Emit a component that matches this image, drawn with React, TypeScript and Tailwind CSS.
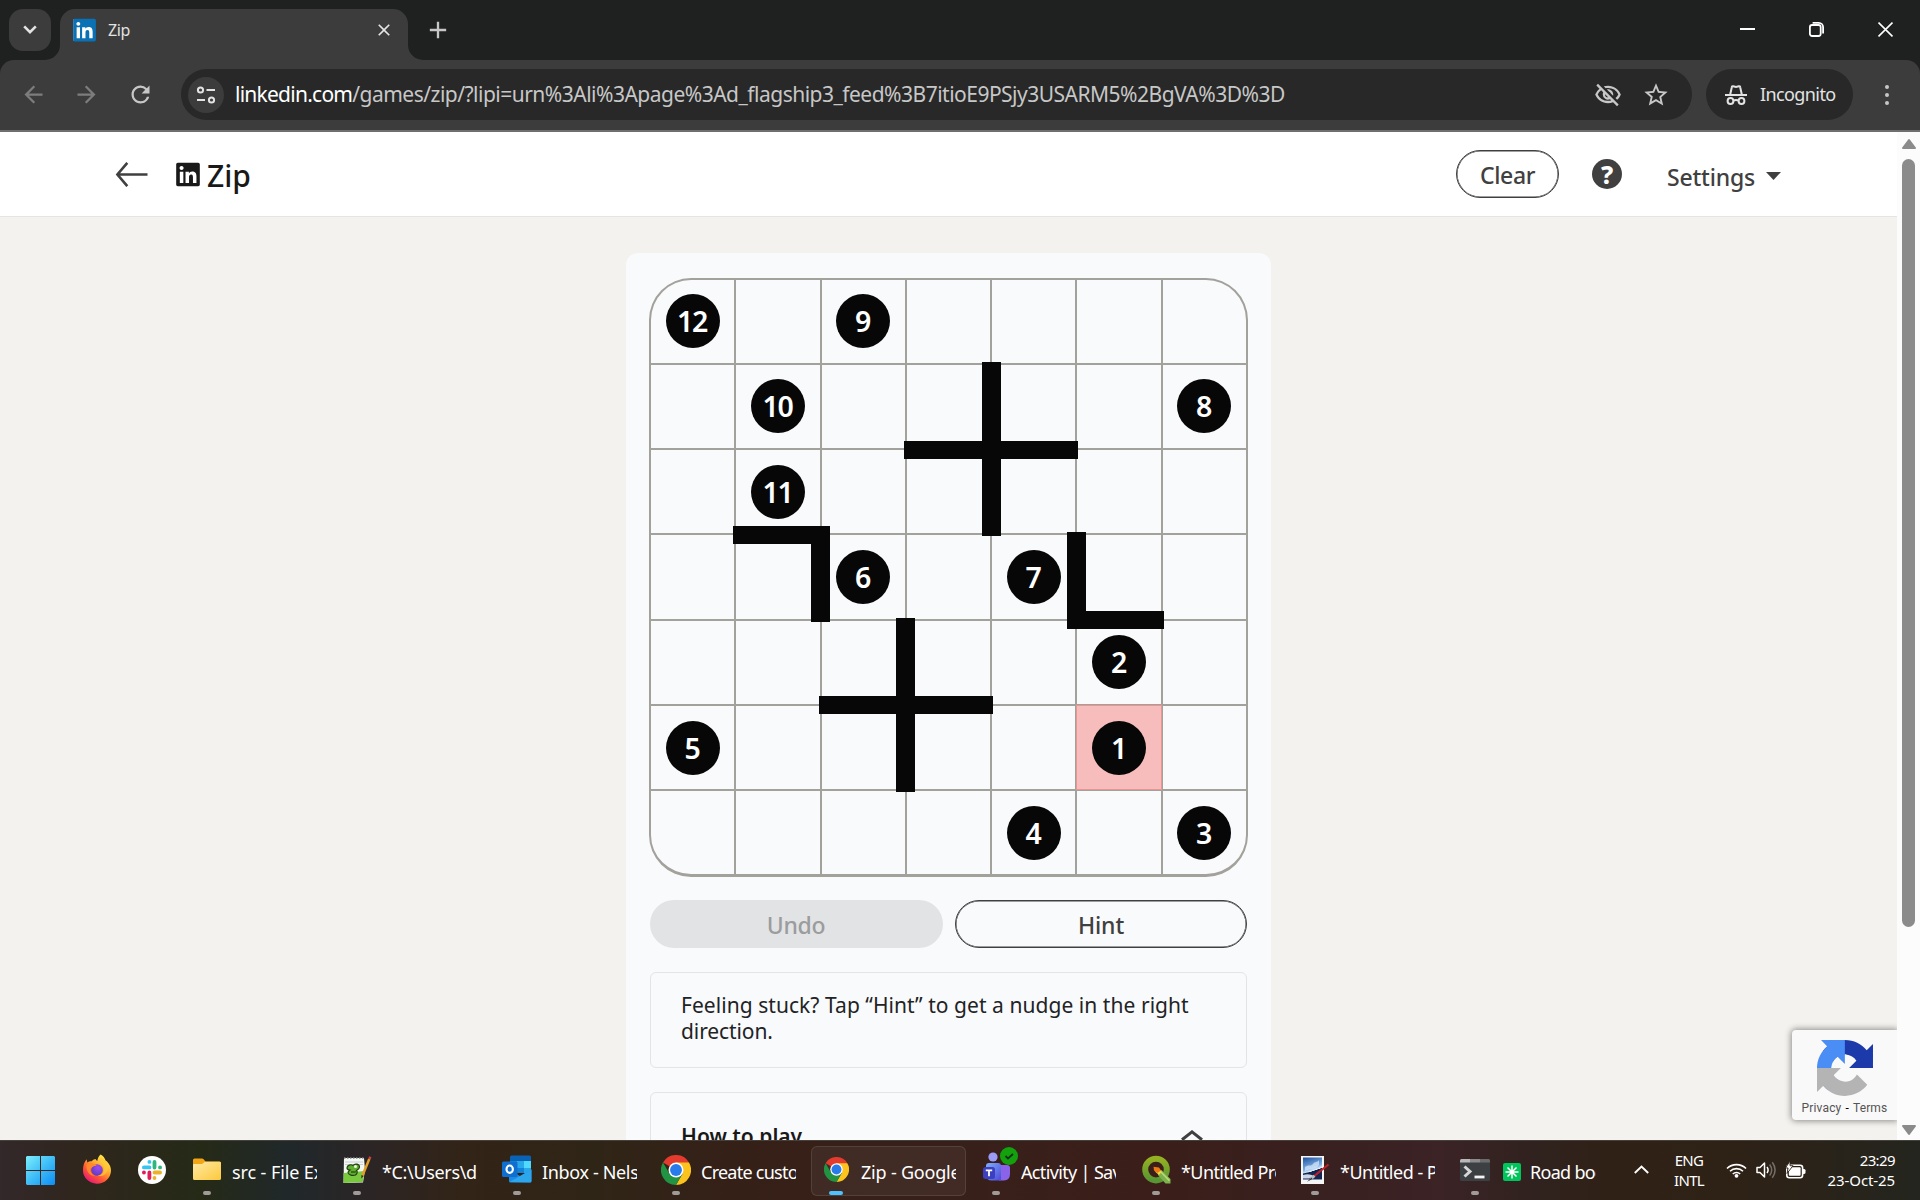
import React from 'react';
import { FaLinkedin } from 'react-icons/fa';
import {
  MdArrowBack,
  MdArrowForward,
  MdRefresh,
  MdOutlineVisibilityOff,
  MdStarBorder,
  MdClose,
  MdAdd,
} from 'react-icons/md';

/* ---------- Browser chrome ---------- */

function TabStrip() {
  return (
    <div className="flex h-[60px] items-start bg-[#1f2121] pt-[9px]">
      <div className="ml-[9px] flex h-[42px] w-[42px] items-center justify-center rounded-[14px] bg-[#3c3c3c]">
        <svg width="14" height="10" viewBox="0 0 14 10" fill="none" stroke="#e3e3e3" strokeWidth="2.600">
          <path d="M1.200 1.400 7 7.200l5.800-5.800" />
        </svg>
      </div>
      <svg className="ml-[-6px] mt-[36px] shrink-0" width="15" height="15" viewBox="0 0 15 15" fill="#3c3c3c">
        <path d="M15 0v15H0A15 15 0 0 0 15 0z" />
      </svg>
      <div className="flex h-[51px] w-[348px] items-center rounded-t-[15px] bg-[#3c3c3c] pb-[9px] pl-[13px]">
        <div className="flex h-[22px] w-[22px] items-center justify-center rounded-[2px] bg-white">
          <FaLinkedin className="h-[26px] w-[25px] shrink-0 text-[#0a71b4]" />
        </div>
        <span className="ml-[13px] text-[16px] leading-[22px] tracking-[-0.4px] text-[#e3e3e3]">Zip</span>
        <MdClose className="ml-auto mr-[14px] h-[20px] w-[20px] text-[#e3e3e3]" />
      </div>
      <svg className="mt-[36px] shrink-0" width="15" height="15" viewBox="0 0 15 15" fill="#3c3c3c">
        <path d="M0 0v15h15A15 15 0 0 1 0 0z" />
      </svg>
      <MdAdd className="ml-[1px] mt-[7px] h-[28px] w-[28px] text-[#c7c7c7]" />
      <div className="ml-auto mr-[27px] mt-[12px] flex items-center text-white">
        <svg width="15" height="17" viewBox="0 0 15 17" stroke="currentColor" strokeWidth="2">
          <path d="M0 8h15" />
        </svg>
        <svg className="ml-[54px]" width="15" height="17" viewBox="0 0 15 17" fill="none" stroke="currentColor" strokeWidth="1.800">
          <rect x="0.900" y="4" width="10.800" height="11" rx="2.200" />
          <path d="M3.600 1.900h6.200a4.300 4.300 0 0 1 4.300 4.300v6.400" />
        </svg>
        <svg className="ml-[54px]" width="15" height="17" viewBox="0 0 15 17" stroke="currentColor" strokeWidth="1.700">
          <path d="m.5 1.500 14 14m0-14-14 14" />
        </svg>
      </div>
    </div>
  );
}

function SiteSettingsIcon() {
  return (
    <svg width="20" height="20" viewBox="0 0 20 20" fill="none" stroke="#e3e3e3" strokeWidth="2">
      <circle cx="4.500" cy="5" r="2.600" />
      <path d="M10.500 5H19M1 15h8" />
      <circle cx="15.500" cy="15" r="2.600" />
    </svg>
  );
}

function IncognitoIcon() {
  return (
    <svg width="22" height="20" viewBox="0 0 22 20" fill="none" stroke="#e3e3e3" strokeWidth="2">
      <path d="M0 10h22" />
      <path d="M5.200 9.500 6.800 2.200Q7 1 8.200 1.200L11 1.900l2.800-.7q1.200-.2 1.400 1l1.600 7.300" />
      <circle cx="5.500" cy="16" r="2.900" />
      <circle cx="16.500" cy="16" r="2.900" />
      <path d="M8.300 15.700q2.700-1.600 5.400 0" />
    </svg>
  );
}

function Toolbar() {
  return (
    <div className="bg-[#1f2121]">
      <div className="flex h-[72px] items-start rounded-t-[14px] border-b-2 border-[#6f6f6f] bg-[#3c3c3c] pt-[9px]">
        <div className="flex h-[51px] items-center">
          <MdArrowBack className="ml-[20px] h-[27px] w-[27px] text-[#7d7d7d]" />
          <MdArrowForward className="ml-[26px] h-[27px] w-[27px] text-[#7d7d7d]" />
          <MdRefresh className="ml-[27px] h-[27px] w-[27px] text-[#c7c7c7]" />
        </div>
        <div className="ml-[27px] flex h-[51px] w-[1511px] items-center rounded-full bg-[#282828]">
          <div className="ml-[7px] flex h-[36px] w-[36px] items-center justify-center rounded-full bg-[#3c3c3c]">
            <SiteSettingsIcon />
          </div>
          <div className="-mt-px ml-[11px] whitespace-nowrap text-[21px] leading-[30px] text-[#c7c7c7]">
            <span className="tracking-[-0.75px] text-white">linkedin.com</span>
            <span className="tracking-[-0.51px]">/games/zip/?lipi=urn%3Ali%3Apage%3Ad_flagship3_feed%3B7itioE9PSjy3USARM5%2BgVA%3D%3D</span>
          </div>
          <MdOutlineVisibilityOff className="ml-auto h-[28px] w-[28px] text-[#c7c7c7]" />
          <MdStarBorder className="ml-[20px] mr-[22px] h-[28px] w-[28px] text-[#c7c7c7]" />
        </div>
        <div className="ml-[14px] flex h-[51px] w-[147px] items-center rounded-full bg-[#282828] pl-[19px]">
          <IncognitoIcon />
          <span className="ml-[13px] text-[18px] tracking-[-0.6px] text-[#e3e3e3]">Incognito</span>
        </div>
        <div className="ml-[32px] mt-[16px] flex flex-col gap-1">
          <i className="h-1 w-1 rounded-full bg-[#c7c7c7]" />
          <i className="h-1 w-1 rounded-full bg-[#c7c7c7]" />
          <i className="h-1 w-1 rounded-full bg-[#c7c7c7]" />
        </div>
      </div>
    </div>
  );
}

/* ---------- Game page ---------- */

function GameHeader() {
  return (
    <header className="flex h-[85px] shrink-0 items-center border-b border-[#e4e4e2] bg-white pr-[116px] pl-[115px]">
      <svg width="33" height="25" viewBox="0 0 33 25" fill="none" stroke="#404040" strokeWidth="2.600">
        <path d="M2 12.500h30.500M12.300.8 2.400 12.500l9.900 11.700" />
      </svg>
      <FaLinkedin className="ml-[27px] h-[27px] w-[26px] text-[#191919]" />
      <h1 className="ml-[6px] mt-[4px] text-[30px] font-medium leading-[40px] text-[#191919]">Zip</h1>
      <button className="ml-auto flex h-[48px] w-[103px] items-center justify-center rounded-full border border-[#404040] pt-[3px] text-[23px] font-medium tracking-[-0.4px] text-[#404040] shadow-[inset_0_0_0_0.5px_#404040]">
        Clear
      </button>
      <div className="ml-[33px] flex h-[30px] w-[30px] items-center justify-center rounded-full bg-[#404040] text-[25px] font-extrabold leading-none text-white">
        ?
      </div>
      <span className="ml-[45px] mt-[6px] text-[23px] font-medium tracking-[-0.2px] text-[#404040]">Settings</span>
      <svg className="ml-[11px] mt-[4px]" width="15" height="8" viewBox="0 0 15 8" fill="#404040">
        <path d="M0 0h15L7.500 8z" />
      </svg>
    </header>
  );
}

const numbers: Record<string, number> = {
  '0-0': 12,
  '0-2': 9,
  '1-1': 10,
  '1-6': 8,
  '2-1': 11,
  '3-2': 6,
  '3-4': 7,
  '4-5': 2,
  '5-0': 5,
  '5-5': 1,
  '6-4': 4,
  '6-6': 3,
};

const walls = [
  'left-[333px] top-[84px] w-[19px] h-[174px]',
  'left-[255px] top-[163px] w-[174px] h-[18px]',
  'left-[84px] top-[248px] w-[97px] h-[18px]',
  'left-[162px] top-[248px] w-[19px] h-[96px]',
  'left-[418px] top-[254px] w-[19px] h-[97px]',
  'left-[418px] top-[333px] w-[97px] h-[18px]',
  'left-[247px] top-[340px] w-[19px] h-[174px]',
  'left-[170px] top-[418px] w-[174px] h-[18px]',
];

function Board() {
  return (
    <div className="relative h-[599px] w-[599px]">
      <div className="grid h-[599px] w-[599px] grid-cols-[85px_86px_85px_85px_85px_86px_83px] grid-rows-[85px_85px_85px_86px_85px_85px_83px] overflow-hidden rounded-[42px] border-2 border-b-[3px] border-[#a3a19c]">
        {Array.from({ length: 49 }, (_, i) => {
          const row = Math.floor(i / 7);
          const col = i % 7;
          const value = numbers[`${row}-${col}`];
          return (
            <div
              key={i}
              className={`relative flex items-center justify-center border-[#a3a19c] ${col < 6 ? 'border-r-2' : ''} ${row < 6 ? 'border-b-2' : ''} ${col === 2 || col === 6 ? 'pr-px' : ''} ${row === 0 || row === 1 || row === 4 ? 'pb-px' : ''}`}
            >
              {value === 1 && (
                <div className="absolute -bottom-px -left-px -right-px -top-px border border-[#ec9492] bg-[#f7bdbc]" />
              )}
              {value !== undefined && (
                <div className="relative flex h-[54px] w-[54px] items-center justify-center rounded-full bg-[#070707] pb-px pr-px pt-[2px] text-[28.500px] font-semibold leading-none tracking-[-1.200px] text-white">
                  {value}
                </div>
              )}
            </div>
          );
        })}
      </div>
      {walls.map((w) => (
        <div key={w} className={`absolute bg-[#070707] ${w}`} />
      ))}
    </div>
  );
}

function GameCard() {
  return (
    <section className="mx-auto flex w-[645px] shrink-0 flex-col rounded-t-[12px] bg-[#f9fafc] pl-[23px] pr-[24px] pt-[25px]">
      <Board />
      <div className="mt-[23px] flex shrink-0 gap-[12px] pl-px">
        <button className="h-[48px] w-[293px] rounded-full bg-[#e2e3e4] pr-px pt-[3px] text-[23px] font-medium tracking-[-0.3px] text-[#9b9c9d]">
          Undo
        </button>
        <button className="h-[48px] flex-1 rounded-full border border-[#404040] pt-[2px] text-[23px] font-medium tracking-[-0.1px] text-[#404040] shadow-[inset_0_0_0_0.5px_#404040]">
          Hint
        </button>
      </div>
      <div className="ml-px mt-[24px] h-[96px] shrink-0 rounded-[6px] border border-[#e3e4e6] pl-[30px] pt-[19px] text-[21px] leading-[26px] text-[#222324]">
        <span className="tracking-[0.05px]">Feeling stuck? Tap “Hint” to get a nudge in the right</span>
        <br />
        <span className="tracking-[-0.1px]">direction.</span>
      </div>
      <div className="ml-px mt-[24px] flex h-[100px] shrink-0 items-start justify-between rounded-[6px] border border-[#e3e4e6] pl-[30px] pr-[43px] pt-[29px]">
        <h2 className="text-[21px] font-semibold leading-[28px] text-[#191919]">How to play</h2>
        <svg className="mt-[8px]" width="22" height="11" viewBox="0 0 22 11" fill="none" stroke="#404040" strokeWidth="3">
          <path d="M1 9.800 11 1.900l10 7.900" />
        </svg>
      </div>
    </section>
  );
}

function RecaptchaBadge() {
  return (
    <div className="absolute right-0 top-[898px] flex h-[90px] w-[105px] flex-col items-center rounded-l-[4px] bg-[#f9f9f9] pt-[10px] shadow-[0_0_6px_1px_#8c8c8c]">
      <svg width="56" height="56" viewBox="0 0 64 64">
        <path fill="#1c3aa9" d="M64 31.955l-.033-1.370V4.687l-7.160 7.160C50.948 4.674 42.033.093 32.050.093c-10.400 0-19.622 4.960-25.458 12.640l11.736 11.860a15.550 15.550 0 0 1 4.754-5.334c2.050-1.600 4.952-2.906 8.968-2.906.485 0 .860.057 1.135.163 4.976.393 9.288 3.140 11.828 7.124l-8.307 8.307L64 31.953" />
        <path fill="#4a8df5" d="M31.862.094l-1.370.033H4.594l7.160 7.160C4.580 13.147 0 22.060 0 32.046c0 10.400 4.960 19.622 12.640 25.458L24.500 45.768a15.550 15.550 0 0 1-5.334-4.754c-1.600-2.050-2.906-4.952-2.906-8.968 0-.485.057-.860.163-1.135.393-4.976 3.140-9.288 7.124-11.828l8.307 8.307L31.860.095" />
        <path fill="#b4b4b4" d="M.001 32.045l.033 1.370v25.898l7.160-7.160c5.860 7.173 14.774 11.754 24.760 11.754 10.400 0 19.622-4.960 25.458-12.640l-11.736-11.860a15.550 15.550 0 0 1-4.754 5.334c-2.050 1.600-4.952 2.906-8.968 2.906-.485 0-.860-.057-1.135-.163-4.976-.393-9.288-3.140-11.828-7.124l8.307-8.307c-10.522.040-22.400.066-27.295-.005" />
      </svg>
      <p className="mt-[4px] whitespace-nowrap font-[Roboto] text-[12px] leading-[17px] tracking-[0.15px] text-[#555]">
        Privacy <span className="px-px text-black">-</span> Terms
      </p>
    </div>
  );
}

function ScrollBar() {
  return (
    <div className="flex w-[23px] shrink-0 flex-col items-center bg-[#fcfcfc]">
      <svg className="mt-[6px] shrink-0" width="16" height="12" viewBox="0 0 16 12" fill="#8b8b8b" stroke="#8b8b8b" strokeWidth="2" strokeLinejoin="round">
        <path d="M8 2 14 10H2z" />
      </svg>
      <div className="mt-[9px] h-[768px] w-[13px] rounded-full bg-[#8b8b8b]" />
      <svg className="mb-[4px] mt-auto shrink-0" width="16" height="12" viewBox="0 0 16 12" fill="#8b8b8b" stroke="#8b8b8b" strokeWidth="2" strokeLinejoin="round">
        <path d="M8 10 14 2H2z" />
      </svg>
    </div>
  );
}

/* ---------- Taskbar icons ---------- */

function WindowsIcon() {
  return (
    <svg width="29" height="29" viewBox="0 0 29 29">
      <defs>
        <linearGradient id="win" x1="0" y1="0" x2="29" y2="29" gradientUnits="userSpaceOnUse">
          <stop offset="0" stopColor="#7ceffc" />
          <stop offset="0.5" stopColor="#3fbdf7" />
          <stop offset="1" stopColor="#0c8df5" />
        </linearGradient>
      </defs>
      <path fill="url(#win)" d="M1 0h13v14H0V1zM15 0h13l1 1v13H15zM0 15h14v14H1l-1-1zM15 15h14v13l-1 1H15z" />
    </svg>
  );
}

function FirefoxIcon() {
  return (
    <svg width="30" height="30" viewBox="0 0 30 30">
      <defs>
        <linearGradient id="ffx" x1="24" y1="2" x2="5" y2="28" gradientUnits="userSpaceOnUse">
          <stop offset="0" stopColor="#fff04a" />
          <stop offset="0.35" stopColor="#ffb030" />
          <stop offset="0.65" stopColor="#ff5a33" />
          <stop offset="1" stopColor="#e5127c" />
        </linearGradient>
        <radialGradient id="ffp" cx="0.6" cy="0.3" r="0.7">
          <stop offset="0" stopColor="#a04bf0" />
          <stop offset="1" stopColor="#5b3cc4" />
        </radialGradient>
      </defs>
      <path fill="url(#ffx)" d="M18.600.5c3 1.600 4.300 4 5 6 .9.300 1.500 1 1.800 1.600 2.400 2.400 3.600 5.400 3.600 8.400A14 13.500 0 0 1 1 16C1 11.500 2.200 8 4.700 5.200l.5 3.200c1.200-.8 2.800-1.300 4.400-1.200 1.500-1.700 3-2 4-2.200.4 1 .9 1.500 1.700 2 .4-3 1.500-5 3.300-6.500z" />
      <circle cx="15" cy="16" r="5.800" fill="url(#ffp)" />
      <path fill="#ff8a2a" d="M4.500 11c3-3 8-2 10.200.8-3.200-.2-4 1.300-6.200 2.600-.8 3.500 1.500 6.300 5 7.200-5.500.8-9.500-3.600-9-10.600z" />
      <path fill="#ffc83a" d="M18 7c3.200 2.500 4.600 6 3.600 10-.6 2.500-3 4.500-6 4.700 5 1.500 10-1.700 10.300-7.200C26 10 23 6 19.500 3z" opacity="0.75" />
    </svg>
  );
}

function SlackIcon() {
  return (
    <svg width="28" height="28" viewBox="0 0 28 28">
      <circle cx="14" cy="14" r="14" fill="#fff" />
      <g strokeWidth="3.800" strokeLinecap="round">
        <path stroke="#36c5f0" d="M11.400 5.900h.1M5.900 11.400h5.600" />
        <path stroke="#2eb67d" d="M16.500 5.900v5.600M22 11.400h.1" />
        <path stroke="#ecb22e" d="M16.500 22v.1M16.500 16.500h5.600" />
        <path stroke="#e01e5a" d="M11.400 16.500v5.600M5.900 16.500H6" />
      </g>
    </svg>
  );
}

function FolderIcon() {
  return (
    <svg width="28" height="24" viewBox="0 0 28 24">
      <defs>
        <linearGradient id="fold" x1="0" y1="0" x2="1" y2="1">
          <stop offset="0" stopColor="#ffe9a6" />
          <stop offset="1" stopColor="#fcc93c" />
        </linearGradient>
      </defs>
      <path fill="#f2a515" d="M0 2q0-1.500 1.500-1.500H9q1 0 1.600.8L12.500 3.500H26.500Q28 3.500 28 5v6H0z" />
      <path fill="url(#fold)" d="M0 7q0-1 1-1h8l3-2.300h14.500Q28 3.700 28 5v15.500q0 1.500-1.500 1.500h-25Q0 22 0 20.500z" />
    </svg>
  );
}

function NotepadPlusIcon() {
  return (
    <svg width="30" height="28" viewBox="0 0 30 28">
      <path fill="#f4f6f2" d="M2 2h20l1 12-2 12.500L1.500 27z" />
      <path fill="#79c840" d="M1.600 17 22.500 15l-1.700 11L1.500 27z" />
      <path stroke="#b9c4cf" strokeWidth="0.800" d="M3 6h18M3 8.500h18" />
      <path stroke="#7c8388" strokeWidth="1.600" strokeDasharray="1.500 1.500" d="M2 2h20" />
      <path fill="#5fae2f" stroke="#22400f" strokeWidth="1.200" d="M5 12c0-3 4-4 6-2.500C13 7 17.500 8 17.500 11c0 2-2 3-3 3.500 1 1 1 3-1 4.500-3 1-7 0-7.500-2.500C6 15 7.500 14.500 8 14c-1.500 0-3-.5-3-2z" />
      <circle cx="13.500" cy="10.500" r="1.500" fill="#e9f7dc" />
      <path fill="#3c6d1d" d="M9 15h7l-3 2H9z" />
      <path stroke="#e2a126" strokeWidth="2.500" d="M27.300 3 20.500 19.500" />
      <path stroke="#d23f3f" strokeWidth="2.500" d="M28.300.8 27.400 3" />
      <path fill="#3a2b12" d="m19.400 19 2.300 1-2.300 2.400z" />
    </svg>
  );
}

function OutlookIcon() {
  return (
    <svg width="30" height="29" viewBox="0 0 30 29">
      <path fill="#0a62b5" d="M8 2q0-1.500 1.500-1.500h18Q29 .5 29 2v4H8z" />
      <path fill="#1490df" d="M8 6h7v7H8z" />
      <path fill="#28a8ea" d="M15 6h7v7h-7z" />
      <path fill="#50d9ff" d="M22 6h7v7h-7z" />
      <path fill="#0f6cc4" d="M8 13h7v5H8z" />
      <path fill="#1283d8" d="M15 13h7v5h-7z" />
      <path fill="#28a8ea" d="M22 13h7v5h-7z" />
      <path fill="#1a8be4" d="M7 14.500 18 21l11.500-6.500V26q0 1.500-1.500 1.500H8.500Q7 27.500 7 26z" />
      <path fill="#33b0f2" d="M7.500 27 29.500 14.500V26q0 1.500-1.500 1.500z" opacity="0.75" />
      <rect y="6.500" width="15.500" height="15.500" rx="1.500" fill="#0f6fd0" />
      <ellipse cx="7.700" cy="14.200" rx="3.200" ry="3.700" fill="none" stroke="#fff" strokeWidth="2.100" />
    </svg>
  );
}

function ChromeIcon({ size }: { size: number }) {
  return (
    <svg width={size} height={size} viewBox="0 0 48 48">
      <path fill="#e33b2e" d="M24 24 3.200 12A24 24 0 0 1 44.800 12z" />
      <path fill="#fcc31e" d="M24 24V12h20.800A24 24 0 0 1 24 48l10.400-18z" />
      <path fill="#229342" d="M34.400 30 24 48A24 24 0 0 1 3.200 12l10.400 18z" />
      <circle cx="24" cy="24" r="12" fill="#fff" />
      <circle cx="24" cy="24" r="9.500" fill="#2a7bea" />
    </svg>
  );
}

function TeamsIcon() {
  return (
    <svg width="36" height="36" viewBox="0 0 36 36">
      <defs>
        <linearGradient id="tm" x1="0" y1="0" x2="1" y2="1">
          <stop offset="0" stopColor="#7fb0ff" />
          <stop offset="1" stopColor="#4c49d6" />
        </linearGradient>
      </defs>
      <path fill="#8a63e8" d="M17 18h8q3 0 3 3v6q0 6-6 6.500h-5z" />
      <circle cx="11" cy="10" r="4.600" fill="#9b9cf8" />
      <path fill="url(#tm)" d="M4 19q0-3 3-3h9q3 0 3 3v14.500h-9q-6 0-6-6z" />
      <rect x="1" y="20" width="12" height="12" rx="2.500" fill="#3c3fbf" />
      <path stroke="#fff" strokeWidth="1.800" d="M3.800 23.300h6.400M7 23.300v6" />
      <circle cx="27" cy="9" r="9" fill="#13a10e" />
      <path fill="none" stroke="#16301a" strokeWidth="1.800" d="m23.500 9 2.500 2.500 5-4.500" />
    </svg>
  );
}

function QgisIcon() {
  return (
    <svg width="30" height="30" viewBox="0 0 30 30">
      <defs>
        <linearGradient id="qg" x1="0" y1="0" x2="0" y2="1">
          <stop offset="0" stopColor="#93b023" />
          <stop offset="1" stopColor="#589632" />
        </linearGradient>
      </defs>
      <circle cx="15" cy="14.600" r="10.800" fill="none" stroke="url(#qg)" strokeWidth="6" />
      <path fill="#7db14a" d="m17.500 15.500 3-.5L29.500 24v4.500h-5L17 20z" />
      <path fill="#b9d97c" d="m17.500 15.500 1.800-.3 9.700 9.800-1.200 1.200z" />
      <path fill="#f2d63c" d="m14 13 4.500 1 2 3-2.500 3-3.500-3z" />
      <path fill="#ee7913" d="m12.500 11.800 5.500.7 2 3-3.500 2.500-3.500-2.500z" />
    </svg>
  );
}

function PaintIcon() {
  return (
    <svg width="30" height="30" viewBox="0 0 30 30">
      <defs>
        <linearGradient id="sky" x1="0" y1="0" x2="0.3" y2="1">
          <stop offset="0" stopColor="#1d4f9e" />
          <stop offset="0.55" stopColor="#7fb1e6" />
          <stop offset="0.7" stopColor="#e8f1fa" />
          <stop offset="0.72" stopColor="#12204a" />
          <stop offset="1" stopColor="#1b2f66" />
        </linearGradient>
      </defs>
      <path fill="#f5f5f5" d="M1 1h23v28H1z" />
      <path fill="url(#sky)" d="M3 2.500h19v22H3z" />
      <path fill="#dbe9f8" d="M5 12c3-3 6 0 8-3s4-1 6-4v5c-3 5-8 3-14 6z" opacity="0.700" />
      <path fill="#16264f" d="M3 18.500q9-3 19 0v5.500H3z" />
      <path fill="#c9d6e8" d="M3 20q6-2 11 1l-5 2.500H3z" />
      <path stroke="#c21f26" strokeWidth="2" d="M28.500 9.500 13 22" />
      <path stroke="#b9bcc2" strokeWidth="2.800" d="m14.500 20.800-4 3.500" />
      <path fill="#333" d="m11.500 22.500-4.500 4.300 5.500-2.800z" />
    </svg>
  );
}

function TerminalIcon() {
  return (
    <svg width="30" height="24" viewBox="0 0 30 24">
      <rect y="1" width="30" height="22" rx="1.500" fill="#3c4042" />
      <path fill="#b9b9b9" d="M0 2.500Q0 1 1.500 1H10v3.500H0z" />
      <path fill="#8b8b8b" d="M10 1h10v3.500H10z" />
      <path fill="#6b6b6b" d="M20 1h8.500Q30 1 30 2.500v2H20z" />
      <path fill="none" stroke="#d6d6d6" strokeWidth="3" d="m4.500 8.500 5.500 5-5.500 5" />
      <path stroke="#f4f4f4" strokeWidth="2.800" d="M14.500 19h10" />
    </svg>
  );
}

function GreenStarIcon() {
  return (
    <svg width="18" height="18" viewBox="0 0 18 18">
      <rect width="18" height="18" rx="2" fill="#00c45c" />
      <path stroke="#fff" strokeWidth="1.500" d="M9 2.500v13M2.500 9h13M4.500 4.500l9 9M13.500 4.500l-9 9" />
    </svg>
  );
}

/* ---------- Taskbar ---------- */

function TaskItem({
  icon,
  label,
  width,
  textClass,
  active = false,
  extra,
}: {
  icon: React.ReactNode;
  label: string;
  width: string;
  textClass: string;
  active?: boolean;
  extra?: React.ReactNode;
}) {
  return (
    <div className={`flex h-[50px] shrink-0 ${width}`}>
      <div
        className={`flex h-[50px] items-center rounded-[6px] ${active ? 'w-[155px] bg-white/5 ring-1 ring-inset ring-white/10' : 'w-full'}`}
      >
        <div className="flex h-[50px] w-[50px] shrink-0 flex-col items-center">
          <div className="flex h-[45px] items-center pt-[3px]">{icon}</div>
          <i className={`h-[4px] shrink-0 rounded-full ${active ? 'w-[14px] bg-[#4cc2ff]' : 'w-[8px] bg-[#a09b98]'}`} />
        </div>
        {extra}
        <span className={`overflow-hidden whitespace-nowrap pt-[2px] text-[18px] leading-[26px] text-white ${textClass}`}>{label}</span>
      </div>
    </div>
  );
}

function Taskbar() {
  return (
    <div className="flex h-[60px] shrink-0 items-center border-t border-[#45403a] bg-[linear-gradient(90deg,#33282a_0%,#30261d_4%,#252a17_10.500%,#20282a_15%,#2b2526_19%,#322417_24%,#2f2517_31%,#352017_38%,#38201a_50%,#3b1e19_60%,#38201f_68%,#3b2326_75%,#30221e_80%,#302116_84%,#2d2217_92%,#23251e_100%)]">
      <div className="ml-[26px] flex items-center pb-px">
        <WindowsIcon />
        <div className="ml-[27px] mt-[-2px]"><FirefoxIcon /></div>
        <div className="ml-[26px] mt-[-1px]"><SlackIcon /></div>
      </div>
      <div className="ml-[16px] flex">
        <TaskItem icon={<FolderIcon />} label="src - File Explorer" width="w-[150px]" textClass="w-[85px] tracking-[-0.1px]" />
        <TaskItem icon={<NotepadPlusIcon />} label="*C:\Users\david" width="w-[160px]" textClass="w-[95px] tracking-[-0.35px]" />
        <TaskItem icon={<OutlookIcon />} label="Inbox - Nelson" width="w-[159px]" textClass="w-[95px] tracking-[-0.35px]" />
        <TaskItem icon={<ChromeIcon size={30} />} label="Create custom" width="w-[160px]" textClass="w-[95px] tracking-[-0.75px]" />
        <TaskItem icon={<ChromeIcon size={25} />} label="Zip - Google Chrome" width="w-[160px]" textClass="w-[95px] tracking-[-0.2px]" active />
        <TaskItem
          icon={<div className="mt-[-10px] pl-[8px]"><TeamsIcon /></div>}
          label="Activity | Saved"
          width="w-[160px]"
          textClass="w-[95px] tracking-[-0.65px]"
        />
        <TaskItem icon={<QgisIcon />} label="*Untitled Project" width="w-[159px]" textClass="w-[95px] tracking-[-0.6px]" />
        <TaskItem icon={<PaintIcon />} label="*Untitled - Paint" width="w-[160px]" textClass="w-[95px] tracking-[-0.5px]" />
        <TaskItem
          icon={<TerminalIcon />}
          label="Road bookings"
          width="w-[150px]"
          textClass="ml-[9px] w-[66px] tracking-[-0.7px]"
          extra={<div className="ml-[3px] mt-[2px] shrink-0"><GreenStarIcon /></div>}
        />
      </div>
      <div className="ml-auto mr-[25px] flex items-center pb-[2px] text-white">
        <svg width="15" height="9" viewBox="0 0 15 9" fill="none" stroke="currentColor" strokeWidth="1.900">
          <path d="m.8 8 6.700-6.500L14.200 8" />
        </svg>
        <div className="ml-[23px] w-[34px] text-center text-[15px] leading-[20px] tracking-[-0.7px]">
          ENG
          <br />
          INTL
        </div>
        <svg className="ml-[20px]" width="21" height="16" viewBox="0 0 21 16" fill="none" stroke="currentColor" strokeWidth="1.600">
          <path d="M1 6.500a13.500 13.500 0 0 1 19 0M4 9.300a9.300 9.300 0 0 1 13 0M6.800 12a5.300 5.300 0 0 1 7.400 0" />
          <circle cx="10.500" cy="13.800" r="1.900" fill="currentColor" stroke="none" />
        </svg>
        <svg className="ml-[9px]" width="21" height="18" viewBox="0 0 21 18" fill="none" stroke="currentColor" strokeWidth="1.500">
          <path d="M1 6.500h3L8.500 2v14L4 11.500H1z" strokeLinejoin="round" />
          <path d="M11 6q2.200 3 0 6" />
          <path d="M13.600 3.500q4.200 5.500 0 11M16.300 1.200q5.600 7.800 0 15.600" opacity="0.350" />
        </svg>
        <svg className="ml-[8px]" width="21" height="18" viewBox="0 0 21 18">
          <rect x="1.800" y="4.300" width="15.800" height="12.400" rx="2.500" fill="none" stroke="currentColor" strokeWidth="1.600" />
          <rect x="3.800" y="6.300" width="11.800" height="8.400" rx="1" fill="currentColor" />
          <path fill="currentColor" d="M18 8h1.200q1.300.2 1.300 1.300v2.400q0 1.100-1.300 1.300H18z" />
          <path fill="currentColor" stroke="#2f2318" strokeWidth="0.900" d="M5 0 .5 7h2.600L2 12.500l6-7.800H5z" />
        </svg>
        <div className="ml-[17px] w-[72px] text-right text-[15px] leading-[20px] tracking-[-0.100px]">
          <span className="tracking-[-0.6px]">23:29</span>
          <br />
          23-Oct-25
        </div>
      </div>
    </div>
  );
}

export default function App() {
  return (
    <div className="flex h-[1200px] w-[1920px] flex-col overflow-hidden font-['Noto_Sans',sans-serif]">
      <TabStrip />
      <Toolbar />
      <div className="flex h-[1008px]">
        <main className="relative flex flex-1 flex-col overflow-hidden bg-[#f3f2ee]">
          <GameHeader />
          <div className="flex flex-1 overflow-hidden pt-[36px]">
            <GameCard />
          </div>
          <RecaptchaBadge />
        </main>
        <ScrollBar />
      </div>
      <Taskbar />
    </div>
  );
}
